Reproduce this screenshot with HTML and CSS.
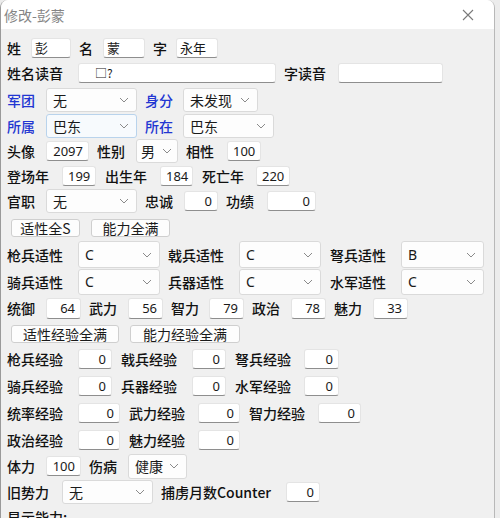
FILE: index.html
```html
<!DOCTYPE html>
<html lang="zh">
<head>
<meta charset="utf-8">
<link rel="stylesheet" href="styles.css">
</head>
<body>
<div class="win">
  <div class="title">
    <span>修改-彭蒙</span>
    <svg class="close" width="12" height="12" viewBox="0 0 12 12"><path d="M1 1L11 11M11 1L1 11" stroke="#7a7a7a" stroke-width="1.1" fill="none"/></svg>
  </div>
  <div class="form">
    <div class="row ra">
      <span class="lb c1">姓</span><span class="in w40 left">彭</span>
      <span class="lb c1">名</span><span class="in w42 left">蒙</span>
      <span class="lb c1b">字</span><span class="in w42 left">永年</span>
    </div>
    <div class="row rb">
      <span class="lb c4">姓名读音</span><span class="in w198 left pad">□?</span>
      <span class="lb c3b">字读音</span><span class="in w105"></span>
    </div>
    <div class="row rc">
      <span class="lb c2 blue">军团</span>
      <div class="sel w91"><span>无</span><svg width="10" height="6" viewBox="0 0 10 6"><path d="M1 1l4 4 4-4" fill="none" stroke="#8a8a8a"/></svg></div>
      <span class="lb c2b blue">身分</span>
      <div class="sel w75"><span>未发现</span><svg width="10" height="6" viewBox="0 0 10 6"><path d="M1 1l4 4 4-4" fill="none" stroke="#8a8a8a"/></svg></div>
    </div>
    <div class="row ra">
      <span class="lb c2 blue">所属</span>
      <div class="sel w91 hover"><span>巴东</span><svg width="10" height="6" viewBox="0 0 10 6"><path d="M1 1l4 4 4-4" fill="none" stroke="#8a8a8a"/></svg></div>
      <span class="lb c2b blue">所在</span>
      <div class="sel w91"><span>巴东</span><svg width="10" height="6" viewBox="0 0 10 6"><path d="M1 1l4 4 4-4" fill="none" stroke="#8a8a8a"/></svg></div>
    </div>
    <div class="row ra">
      <span class="lb c2">头像</span><span class="in w43">2097</span>
      <span class="lb c2">性别</span>
      <div class="sel w42 tight"><span>男</span><svg width="10" height="6" viewBox="0 0 10 6"><path d="M1 1l4 4 4-4" fill="none" stroke="#8a8a8a"/></svg></div>
      <span class="lb c2c">相性</span><span class="in w34">100</span>
    </div>
    <div class="row ra">
      <span class="lb c3">登场年</span><span class="in w34 m9">199</span>
      <span class="lb c3">出生年</span><span class="in w33 m9">184</span>
      <span class="lb c3b">死亡年</span><span class="in w34">220</span>
    </div>
    <div class="row rb">
      <span class="lb c2">官职</span>
      <div class="sel w91"><span>无</span><svg width="10" height="6" viewBox="0 0 10 6"><path d="M1 1l4 4 4-4" fill="none" stroke="#8a8a8a"/></svg></div>
      <span class="lb c2">忠诚</span><span class="in w34">0</span>
      <span class="lb c2c">功绩</span><span class="in w49">0</span>
    </div>
    <div class="row rc btns">
      <span class="btn b69">适性全S</span><span class="btn b79">能力全满</span>
    </div>
    <div class="row rc">
      <span class="lb c4">枪兵适性</span>
      <div class="sel tall w82"><span>C</span><svg width="10" height="6" viewBox="0 0 10 6"><path d="M1 1l4 4 4-4" fill="none" stroke="#8a8a8a"/></svg></div>
      <span class="lb c4">戟兵适性</span>
      <div class="sel tall w82 m9"><span>C</span><svg width="10" height="6" viewBox="0 0 10 6"><path d="M1 1l4 4 4-4" fill="none" stroke="#8a8a8a"/></svg></div>
      <span class="lb c4">弩兵适性</span>
      <div class="sel tall w83"><span>B</span><svg width="10" height="6" viewBox="0 0 10 6"><path d="M1 1l4 4 4-4" fill="none" stroke="#8a8a8a"/></svg></div>
    </div>
    <div class="row rc">
      <span class="lb c4">骑兵适性</span>
      <div class="sel tall2 w82"><span>C</span><svg width="10" height="6" viewBox="0 0 10 6"><path d="M1 1l4 4 4-4" fill="none" stroke="#8a8a8a"/></svg></div>
      <span class="lb c4">兵器适性</span>
      <div class="sel tall2 w82 m9"><span>C</span><svg width="10" height="6" viewBox="0 0 10 6"><path d="M1 1l4 4 4-4" fill="none" stroke="#8a8a8a"/></svg></div>
      <span class="lb c4">水军适性</span>
      <div class="sel tall2 w83"><span>C</span><svg width="10" height="6" viewBox="0 0 10 6"><path d="M1 1l4 4 4-4" fill="none" stroke="#8a8a8a"/></svg></div>
    </div>
    <div class="row rb">
      <span class="lb c2">统御</span><span class="in h21 w35">64</span>
      <span class="lb c2">武力</span><span class="in h21 w35">56</span>
      <span class="lb c2b">智力</span><span class="in h21 w35">79</span>
      <span class="lb c2">政治</span><span class="in h21 w35">78</span>
      <span class="lb c2">魅力</span><span class="in h21 w35">33</span>
    </div>
    <div class="row ra btns">
      <span class="btn b108">适性经验全满</span><span class="btn b110">能力经验全满</span>
    </div>
    <div class="row rb">
      <span class="lb c4">枪兵经验</span><span class="in w34 m9">0</span>
      <span class="lb c4">戟兵经验</span><span class="in w34 m9">0</span>
      <span class="lb c4b">弩兵经验</span><span class="in w35">0</span>
    </div>
    <div class="row rc">
      <span class="lb c4">骑兵经验</span><span class="in w34 m9">0</span>
      <span class="lb c4">兵器经验</span><span class="in w34 m9">0</span>
      <span class="lb c4b">水军经验</span><span class="in w35">0</span>
    </div>
    <div class="row rd">
      <span class="lb c4">统率经验</span><span class="in w42 m9">0</span>
      <span class="lb c4b">武力经验</span><span class="in w42 m9">0</span>
      <span class="lb c4b">智力经验</span><span class="in w43">0</span>
    </div>
    <div class="row rb">
      <span class="lb c4">政治经验</span><span class="in w42 m9">0</span>
      <span class="lb c4b">魅力经验</span><span class="in w42">0</span>
    </div>
    <div class="row rb">
      <span class="lb c2">体力</span><span class="in w35">100</span>
      <span class="lb c2">伤病</span>
      <div class="sel w59 h25"><span>健康</span><svg width="10" height="6" viewBox="0 0 10 6"><path d="M1 1l4 4 4-4" fill="none" stroke="#8a8a8a"/></svg></div>
    </div>
    <div class="row rb">
      <span class="lb c3">旧势力</span>
      <div class="sel w91"><span>无</span><svg width="10" height="6" viewBox="0 0 10 6"><path d="M1 1l4 4 4-4" fill="none" stroke="#8a8a8a"/></svg></div>
      <span class="lb cc">捕虏月数Counter</span><span class="in w34">0</span>
    </div>
    <div class="row rlast">
      <span class="lb">显示能力:</span>
    </div>
  </div>
</div>
</body>
</html>
```

FILE: styles.css
```css
html, body {
  margin: 0;
  padding: 0;
}
body {
  width: 500px;
  height: 518px;
  overflow: hidden;
  background: #ececec;
  font-family: "Noto Sans", "Noto Sans CJK SC", sans-serif;
  font-size: 14px;
  color: #111;
}
.win {
  width: 495px;
  height: 530px;
  box-sizing: border-box;
  background: #f0f0f0;
  border-left: 1px solid #9a9a9a;
  border-right: 1px solid #b8b8b8;
  border-top-left-radius: 8px;
  border-top-right-radius: 8px;
  overflow: hidden;
}
.title {
  height: 29px;
  background: #fff;
  display: flex;
  align-items: center;
  padding-left: 3px;
  font-family: "Noto Sans CJK SC", sans-serif;
  font-size: 14px;
  color: #858585;
}
.close {
  margin-left: auto;
  margin-right: 20px;
}
.form {
  padding-top: 6px;
  padding-left: 6px;
}
.row {
  display: flex;
  align-items: center;
}
.ra { height: 25px; }
.rb { height: 26px; }
.rc { height: 27px; }
.rd { height: 28px; }
.rlast { height: 20px; align-items: flex-start; padding-top: 2px; }

.lb {
  font-family: "Noto Sans CJK SC", sans-serif;
  font-size: 14px;
  font-weight: 500;
  color: #111;
  white-space: nowrap;
  flex: none;
}
.blue { color: #2236d2; }
.c1 { width: 24px; }
.c1b { width: 23px; }
.c2 { width: 39px; }
.c2b { width: 38px; }
.c2c { width: 41px; }
.c3 { width: 55px; }
.c3b { width: 54px; }
.c4 { width: 71px; }
.c4b { width: 69px; }
.cc { width: 125px; }

.in {
  flex: none;
  box-sizing: border-box;
  height: 20px;
  background: #fff;
  border: 1px solid #e4e4e4;
  border-bottom: 1px solid #8e8e8e;
  border-radius: 3px;
  padding: 0 5px;
  text-align: right;
  font-family: "Noto Sans", "Noto Sans CJK SC", sans-serif;
  font-size: 13px;
  line-height: 18px;
  color: #1a1a1a;
  margin-right: 8px;
}
.in.h21 { height: 21px; line-height: 19px; }
.in.left { text-align: left; padding-left: 3px; font-family: "Noto Sans CJK SC", sans-serif; }
.in.pad { padding-left: 16px; font-size: 12px; }
.m9 { margin-right: 9px !important; }

.sel {
  flex: none;
  box-sizing: border-box;
  height: 24px;
  display: flex;
  align-items: center;
  justify-content: space-between;
  background: #fdfdfd;
  border: 1px solid #dadada;
  border-radius: 3px;
  padding: 0 7px 0 6px;
  font-family: "Noto Sans", "Noto Sans CJK SC", sans-serif;
  font-size: 14px;
  color: #1a1a1a;
  margin-right: 8px;
}
.sel.tight { padding: 0 5px 0 4px; }
.sel.hover {
  border-color: #b9d3ec;
  background: #f7fafd;
}
.sel.tall { height: 27px; }
.sel.tall2 { height: 26px; }
.sel.h25 { height: 25px; }

.w33 { width: 33px; }
.w34 { width: 34px; }
.w35 { width: 35px; }
.w40 { width: 40px; }
.w42 { width: 42px; }
.w43 { width: 43px; }
.w49 { width: 49px; }
.w59 { width: 59px; }
.w75 { width: 75px; }
.w82 { width: 82px; }
.w83 { width: 83px; }
.w91 { width: 91px; }
.w105 { width: 105px; }
.w198 { width: 198px; }

.btns { padding-left: 4px; }
.btn {
  flex: none;
  box-sizing: border-box;
  height: 18px;
  display: flex;
  align-items: center;
  justify-content: center;
  background: #fdfdfd;
  border: 1px solid #cfcfcf;
  border-radius: 3px;
  font-family: "Noto Sans CJK SC", sans-serif;
  font-size: 14px;
  color: #1a1a1a;
  margin-right: 11px;
}
.b69 { width: 69px; }
.b79 { width: 79px; }
.b108 { width: 108px; }
.b110 { width: 110px; }
```
